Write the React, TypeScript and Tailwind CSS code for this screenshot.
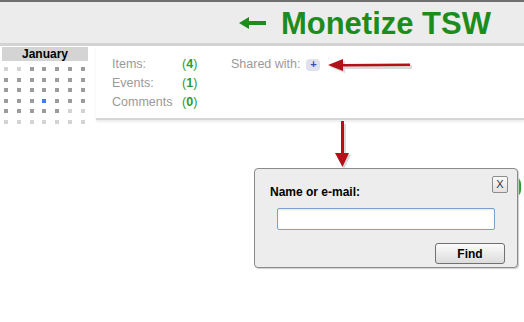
const days = [
  "l", "l", "d", "d", "d", "d", "d",
  "d", "d", "d", "d", "d", "d", "d",
  "d", "d", "d", "d", "d", "d", "d",
  "d", "d", "d", "b", "d", "d", "d",
  "d", "d", "d", "d", "d", "l", "l",
  "l", "l", "l", "l", "l", "l", "l",
];

const stats = [
  { label: "Items:", value: 4 },
  { label: "Events:", value: 1 },
  { label: "Comments", value: 0 },
];

const MiniCalendar = () => (
  <div className="w-[86px] ml-[2px] mt-[1px]">
    <div className="h-[14px] bg-[#d4d4d4] text-center text-[12px] leading-[14px] font-bold text-black">
      January
    </div>
    <div className="grid grid-cols-[repeat(7,4px)] gap-x-[8.8px] gap-y-[6.6px] pl-[2px] pt-[6px]">
      {days.map((d, i) => (
        <span
          key={i}
          className={
            d === "b"
              ? "w-[4px] h-[4px] bg-[#3f7cf0]"
              : d === "d"
              ? "w-[4px] h-[4px] bg-[#9c9c9c]"
              : "w-[4px] h-[4px] bg-[#d3d3d3]"
          }
        />
      ))}
    </div>
  </div>
);

const App = () => {
  return (
    <div className="relative w-[524px] h-[322px] overflow-hidden bg-white font-['Liberation_Sans',Arial,sans-serif]">
      <header className="h-[46px] border-t-[2px] border-t-[#707070] border-b-[3px] border-b-[#d3d3d3] bg-[#ececec] flex items-center justify-end pr-[33px] pt-[1px]">
        <svg width="28" height="12" viewBox="0 0 28 12" className="mr-[14px]">
          <path d="M0 6 L10 0 L10 4 L27 4 L27 8 L10 8 L10 12 Z" fill="#1c8c1c" />
        </svg>
        <h1 className="text-[31px] leading-none font-bold text-[#1c8c1c]">
          Monetize TSW
        </h1>
      </header>

      <div className="flex">
        <MiniCalendar />
        <div className="ml-[8px] flex-1 h-[74px] border-b-2 border-[#d6d6d6] shadow-[0_2px_2px_#ededed] flex pl-[16px] pt-[9px] text-[12.5px] text-[#9a9a9a]">
          <div className="w-[119px]">
            {stats.map((s) => (
              <div key={s.label} className="flex h-[19px] items-center">
                <span className="w-[70px]">{s.label}</span>
                <span className="text-[#2f9a2f]">
                  (<b>{s.value}</b>)
                </span>
              </div>
            ))}
          </div>
          <div className="flex h-[19px] items-center">
            <span>Shared with:</span>
            <span className="ml-[6px] w-[14px] h-[12px] rounded-[4px] bg-[#dfe1ee] flex items-center justify-center text-[#3c4fb4] text-[11px] font-bold leading-none">
              +
            </span>
          </div>
        </div>
      </div>

      {/* annotation arrows */}
      <svg className="absolute left-[326px] top-[56px]" width="90" height="20" viewBox="0 0 90 20">
        <path d="M4 11 L19 5 L19 9 L86 9 L86 13 L19 13 L19 17 Z" fill="#c9c9c9" opacity="0.7" />
        <path d="M2 9 L17 3 L17 8 L84 7.5 L84 10 L17 10.5 L17 15 Z" fill="#b3101a" />
      </svg>
      <svg className="absolute left-[332px] top-[121px]" width="22" height="50" viewBox="0 0 22 50">
        <path d="M11 3 L14 3 L14 34 L19 34 L12 48 L5 34 L11 34 Z" fill="#c9c9c9" opacity="0.7" />
        <path d="M9 0 L12 0 L12 32 L17 32 L10.5 46 L3 32 L9 32 Z" fill="#b3101a" />
      </svg>

      <div className="absolute left-[505px] top-[176px] w-[16px] h-[22px] rounded-full bg-[#2a9a2a]" />

      <div className="absolute left-[254px] top-[168px] w-[264px] h-[100px] rounded-[4px] border border-[#8a8a8a] bg-[#ededed] shadow-[1px_1px_1px_#d0d0d0] px-[15px] pt-[16px]">
        <button className="absolute right-[9px] top-[7px] w-[16px] h-[17px] border border-[#8c8c8c] rounded-[2px] bg-gradient-to-b from-[#fafafa] to-[#e2e2e2] text-[11px] leading-none text-[#333] flex items-center justify-center">
          X
        </button>
        <div className="text-[12px] font-bold text-black leading-[14px]">Name or e-mail:</div>
        <input
          className="mt-[9px] ml-[7px] w-[218px] h-[22px] border border-[#7ba1cf] rounded-[2px] bg-white shadow-[inset_0_1px_2px_#dfe6ef] outline-none"
          type="text"
        />
        <div className="flex justify-end mt-[12px] pr-[-2px]">
          <button className="mr-[-3px] w-[70px] h-[21px] border border-[#707070] rounded-[3px] bg-gradient-to-b from-[#fbfbfb] to-[#dcdcdc] text-[12px] font-bold text-black">
            Find
          </button>
        </div>
      </div>
    </div>
  );
};

export default App;
